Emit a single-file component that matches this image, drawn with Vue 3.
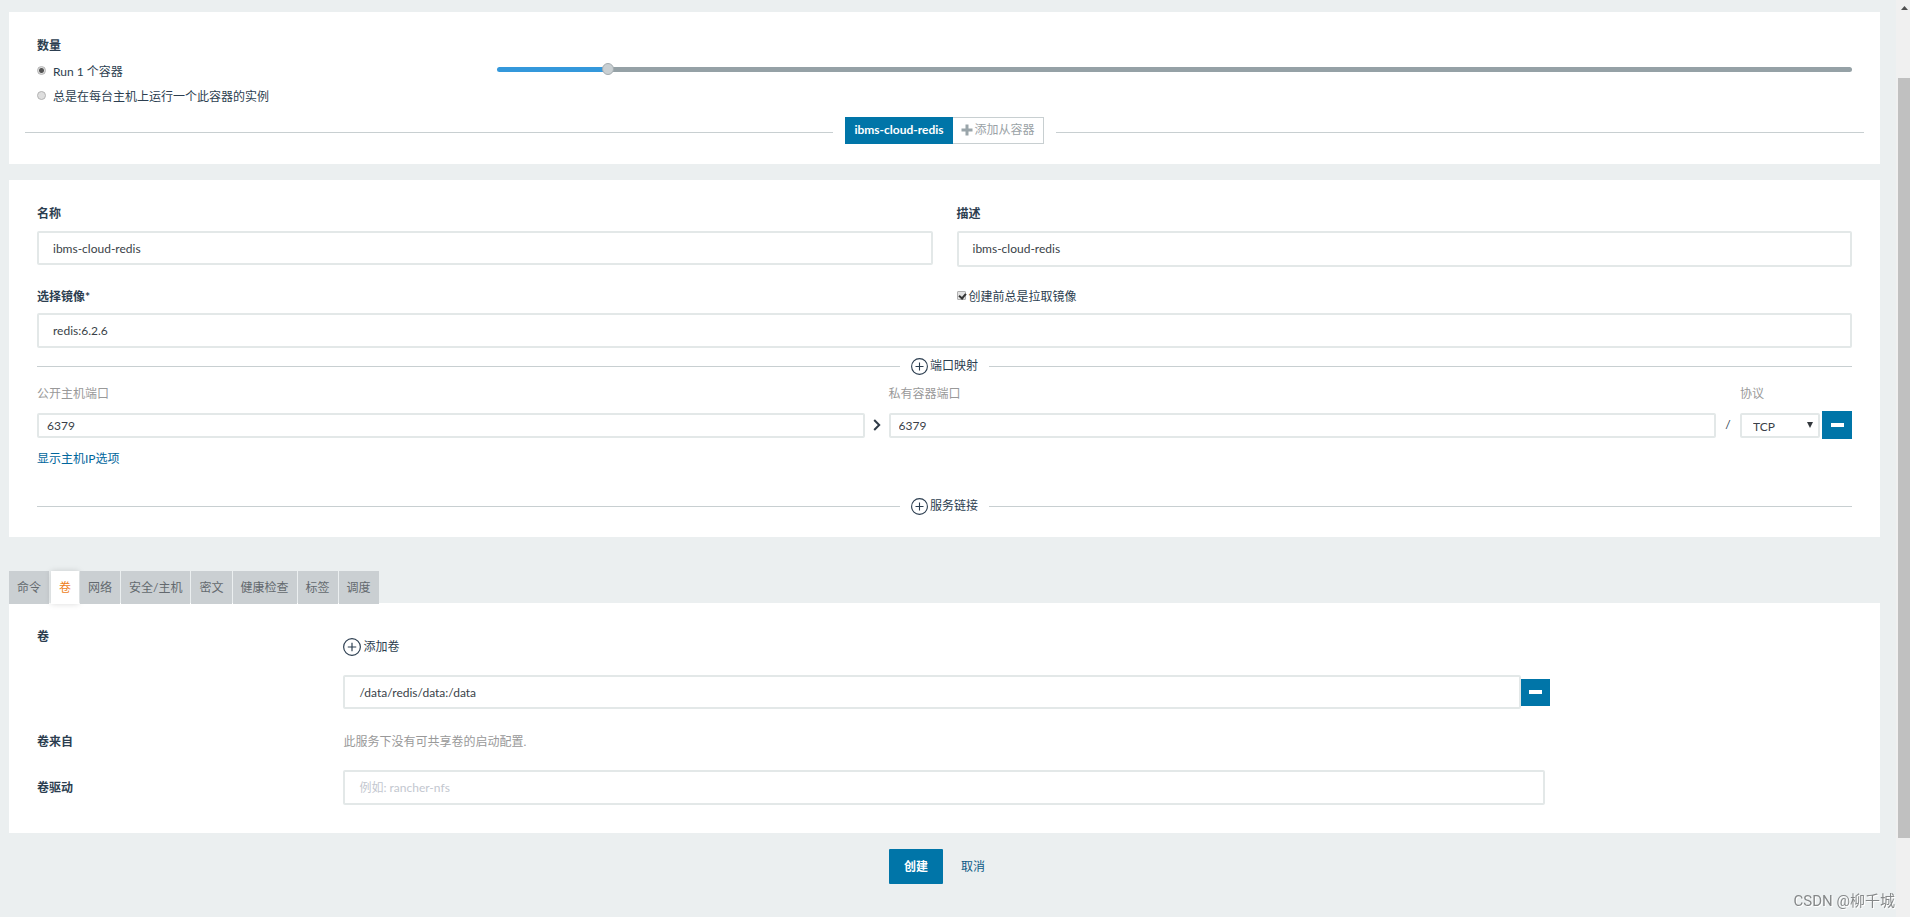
<script setup>
import { ref, computed } from 'vue'

const mode = ref('scale')
const scale = ref(5)
const maxScale = 64
const fill = computed(() => `${(scale.value / maxScale) * 100}%`)

const name = ref('ibms-cloud-redis')
const description = ref('ibms-cloud-redis')
const image = ref('redis:6.2.6')
const pullImage = ref(true)
const publicPort = ref('6379')
const privatePort = ref('6379')
const protocol = ref('TCP')
const volume = ref('/data/redis/data:/data')
const driver = ref('')

const tabs = ['命令', '卷', '网络', '安全/主机', '密文', '健康检查', '标签', '调度']
const activeTab = ref('卷')
</script>

<template>
  <div class="shell">
    <main class="page">
      <section class="panel scale-panel">
        <div class="row">
          <div class="col-3">
            <h2 class="label">数量</h2>
            <label class="radio-line first">
              <input v-model="mode" type="radio" name="mode" value="scale" />
              <span>Run 1 个容器</span>
            </label>
            <label class="radio-line">
              <input v-model="mode" type="radio" name="mode" value="global" />
              <span>总是在每台主机上运行一个此容器的实例</span>
            </label>
          </div>
          <div class="col-9 slider-col">
            <input
              v-model.number="scale"
              class="slider"
              type="range"
              min="0"
              :max="maxScale"
              aria-label="数量"
              :style="{ '--fill': fill }"
            />
          </div>
        </div>
        <div class="divider container-divider">
          <div class="btn-group">
            <button type="button" class="btn-primary container-btn">ibms-cloud-redis</button>
            <button type="button" class="sidekick-btn">
              <svg width="12" height="12" viewBox="0 0 12 12" aria-hidden="true">
                <path d="M4.5 0.5h3v4h4v3h-4v4h-3v-4h-4v-3h4z" fill="#9aa5aa" />
              </svg>
              <span>添加从容器</span>
            </button>
          </div>
        </div>
      </section>

      <section class="panel form-panel">
        <div class="two-cols">
          <div>
            <label class="label" for="name">名称</label>
            <input id="name" v-model="name" class="field name-field" type="text" />
          </div>
          <div>
            <label class="label" for="desc">描述</label>
            <textarea id="desc" v-model="description" class="field desc-field" rows="1"></textarea>
          </div>
        </div>
        <div class="two-cols image-head">
          <label class="label" for="image">选择镜像*</label>
          <label class="check-line">
            <input v-model="pullImage" type="checkbox" />
            <span>创建前总是拉取镜像</span>
          </label>
        </div>
        <input id="image" v-model="image" class="field image-field" type="text" />

        <div class="divider port-divider">
          <button type="button" class="add-btn">
            <svg width="17" height="17" viewBox="0 0 17 17" aria-hidden="true">
              <circle cx="8.5" cy="8.5" r="7.9" />
              <path d="M8.5 4.5v8M4.5 8.5h8" />
            </svg>
            <span>端口映射</span>
          </button>
        </div>

        <div class="ports port-head">
          <label for="public">公开主机端口</label>
          <span></span>
          <label for="private">私有容器端口</label>
          <span></span>
          <label for="proto">协议</label>
        </div>
        <div class="ports port-row">
          <input id="public" v-model="publicPort" class="field small-field" type="text" />
          <svg class="chevron" width="8" height="12" viewBox="0 0 8 12" aria-hidden="true">
            <path d="M1.2 1l5 5-5 5" fill="none" stroke="#2f3b47" stroke-width="2" />
          </svg>
          <input id="private" v-model="privatePort" class="field small-field" type="text" />
          <span class="slash">/</span>
          <div class="select-wrap">
            <select id="proto" v-model="protocol" class="field small-field select">
              <option>TCP</option>
              <option>UDP</option>
            </select>
            <svg class="caret" width="6" height="6" viewBox="0 0 6 6" aria-hidden="true">
              <path d="M0 0h6L3 6z" fill="#33383d" />
            </svg>
          </div>
          <button type="button" class="btn-primary remove-port" aria-label="删除端口">
            <svg width="13" height="4" viewBox="0 0 13 4"><rect width="13" height="4" fill="#fff" /></svg>
          </button>
        </div>
        <a class="link" href="#">显示主机IP选项</a>

        <div class="divider link-divider">
          <button type="button" class="add-btn">
            <svg width="17" height="17" viewBox="0 0 17 17" aria-hidden="true">
              <circle cx="8.5" cy="8.5" r="7.9" />
              <path d="M8.5 4.5v8M4.5 8.5h8" />
            </svg>
            <span>服务链接</span>
          </button>
        </div>
      </section>

      <div class="tabs" role="tablist">
        <button
          v-for="tab in tabs"
          :key="tab"
          type="button"
          role="tab"
          class="tab"
          :class="{ active: tab === activeTab }"
          :aria-selected="tab === activeTab"
          @click="activeTab = tab"
        >
          {{ tab }}
        </button>
      </div>
      <section class="panel volume-panel">
        <div class="row">
          <div class="col-2"><label class="label" for="volume">卷</label></div>
          <div class="col-8">
            <button type="button" class="add-btn add-volume">
              <svg width="18" height="18" viewBox="0 0 17 17" aria-hidden="true">
                <circle cx="8.5" cy="8.5" r="7.9" />
                <path d="M8.5 4.5v8M4.5 8.5h8" />
              </svg>
              <span>添加卷</span>
            </button>
            <div class="volume-row">
              <input id="volume" v-model="volume" class="field" type="text" />
              <button type="button" class="btn-primary remove-volume" aria-label="删除卷">
                <svg width="13" height="4" viewBox="0 0 13 4"><rect width="13" height="4" fill="#fff" /></svg>
              </button>
            </div>
          </div>
        </div>
        <div class="row from-row">
          <div class="col-2"><span class="label">卷来自</span></div>
          <div class="col-8"><p class="muted">此服务下没有可共享卷的启动配置.</p></div>
        </div>
        <div class="row driver-row">
          <div class="col-2"><label class="label" for="driver">卷驱动</label></div>
          <div class="col-8">
            <input id="driver" v-model="driver" class="field image-field" type="text" placeholder="例如: rancher-nfs" />
          </div>
        </div>
      </section>

      <footer class="actions">
        <button type="button" class="btn-primary create">创建</button>
        <button type="button" class="cancel">取消</button>
      </footer>
    </main>
    <div class="scrollbar" aria-hidden="true">
      <svg class="arrow" width="7" height="4" viewBox="0 0 7 4"><path d="M0 4L3.5 0 7 4z" fill="#505050" /></svg>
      <div class="thumb"></div>
    </div>
    <div class="watermark">CSDN @柳千城</div>
  </div>
</template>

<style>
body {
  background: #ebeff0;
}
</style>

<style scoped>
* {
  box-sizing: border-box;
}
.shell {
  display: flex;
  min-height: 100vh;
  background: #ebeff0;
  color: #2c3e50;
  font: 12px/20px Lato, "Noto Sans CJK SC", sans-serif;
}
button,
input,
select,
textarea {
  margin: 0;
  font: inherit;
  color: inherit;
}
button {
  display: flex;
  align-items: center;
  justify-content: center;
  padding: 0;
  border: 0;
  background: none;
  cursor: pointer;
}
.page {
  flex: 1;
  min-width: 0;
  padding: 12px 16px 0 9px;
}
.panel {
  background: #fff;
}
.row {
  display: flex;
  margin: 0 16px;
}
.col-2,
.col-3,
.col-8,
.col-9 {
  padding: 0 12px;
}
.col-2 {
  width: calc(100% / 6);
}
.col-3 {
  width: 25%;
}
.col-8 {
  width: calc(100% / 3 * 2);
}
.col-9 {
  width: 75%;
}
.label {
  display: block;
  margin: 0;
  font-size: 12px;
  font-weight: 700;
}

/* Scale */
.scale-panel {
  padding: 24px 0 20px;
}
.radio-line {
  display: flex;
  gap: 7px;
  margin-top: 5px;
}
.radio-line.first {
  margin-top: 6px;
}
.radio-line input {
  appearance: none;
  width: 9px;
  height: 9px;
  margin-top: 4px;
  border: 1px solid #b4b4b4;
  border-radius: 50%;
  background: #dedede;
}
.radio-line input:checked {
  background: radial-gradient(circle, #555 0 2px, #dedede 3px);
}
.slider-col {
  padding-top: 27px;
}
.slider {
  display: block;
  appearance: none;
  width: 100%;
  height: 12px;
  background: none;
}
.slider::-webkit-slider-runnable-track {
  height: 5px;
  border-radius: 3px;
  background: linear-gradient(to right, #3498db var(--fill), #95a1a6 var(--fill));
}
.slider::-webkit-slider-thumb {
  appearance: none;
  width: 12px;
  height: 12px;
  margin-top: -4px;
  border: 1px solid #a4acb0;
  border-radius: 50%;
  background: #c9cfd2;
}
.divider {
  display: flex;
  align-items: center;
  gap: 11px;
}
.divider::before,
.divider::after {
  content: "";
  flex: 1;
  height: 1px;
  background: #c8cfd1;
}
.container-divider {
  gap: 12px;
  margin: 10px 16px 0;
}
.container-divider::before,
.container-divider::after {
  margin-top: 4px;
}
.btn-group {
  display: flex;
}
.btn-primary {
  background: #0075a8;
  color: #fff;
  font-weight: 700;
}
.container-btn {
  height: 27px;
  padding: 0 9px 2px;
}
.sidekick-btn {
  height: 27px;
  gap: 2px;
  padding: 0 8px 2px;
  border: 1px solid #c8cfd1;
  border-left: 0;
  color: #9aa2a6;
}

/* Container form */
.form-panel {
  margin-top: 16px;
  padding: 24px 28px 21px;
}
.two-cols {
  display: grid;
  grid-template-columns: 1fr 1fr;
  column-gap: 24px;
}
.field {
  display: block;
  width: 100%;
  height: 34px;
  padding: 0 14px;
  border: 2px solid #e3e8e8;
  border-radius: 2px;
  background: #fff;
  color: #3a3f48;
  outline: 0;
}
.field::placeholder {
  color: #c3c7cf;
}
.name-field {
  margin-top: 7px;
}
.desc-field {
  height: 36px;
  margin-top: 7px;
  padding: 6px 14px;
  resize: none;
  overflow: hidden;
}
.image-head {
  height: 20px;
  margin: 20px 0 6px;
}
.image-field {
  height: 35px;
}
.check-line {
  display: flex;
  gap: 3px;
}
.check-line input {
  appearance: none;
  position: relative;
  width: 9px;
  height: 9px;
  margin-top: 4px;
  border: 1px solid #b0b0b0;
  border-radius: 1px;
  background: #e2e2e2;
}
.check-line input:checked::after {
  content: "";
  position: absolute;
  left: 2px;
  top: 0;
  width: 3px;
  height: 5px;
  border: solid #333;
  border-width: 0 2px 2px 0;
  transform: rotate(40deg);
}
.port-divider {
  margin-top: 8px;
}
.add-btn {
  height: 20px;
  gap: 2px;
}
.add-btn svg {
  fill: none;
  stroke: #2c3e50;
  stroke-width: 1.1;
}
.ports {
  display: grid;
  grid-template-columns: 1fr 24px 1fr 24px 80px 32px;
  align-items: center;
}
.port-head {
  margin-top: 8px;
  color: #999;
}
.port-row {
  margin-top: 7px;
}
.small-field {
  height: 25px;
  padding: 0 8px;
}
.chevron,
.slash {
  justify-self: center;
}
.select-wrap {
  position: relative;
}
.select {
  appearance: none;
  padding: 2px 11px 0;
}
.caret {
  position: absolute;
  right: 7px;
  top: 9px;
  pointer-events: none;
}
.remove-port {
  width: 30px;
  height: 28px;
  margin-left: 2px;
}
.link {
  display: table;
  margin-top: 10px;
  color: #00669c;
  text-decoration: none;
}
.link-divider {
  margin-top: 27px;
}

/* Tabs */
.tabs {
  display: flex;
  position: relative;
  gap: 1px;
  margin: 34px 0 -1px;
}
.tab {
  height: 33px;
  padding: 0 8px;
  background: #cacfd2;
  color: #63696e;
}
.tab.active {
  margin-left: 1px;
  background: #fff;
  box-shadow: 0 0 6px rgba(0, 0, 0, 0.15);
  color: #ee7f1d;
}
.volume-panel {
  padding: 24px 0 28px;
}
.add-volume {
  margin-top: 10px;
}
.volume-row {
  display: flex;
  align-items: center;
  width: calc(100% + 5px);
  margin-top: 18px;
}
.volume-row .field {
  flex: 1;
  min-width: 0;
}
.remove-volume {
  width: 29px;
  height: 27px;
}
.from-row {
  margin-top: 23px;
}
.muted {
  margin: 0;
  color: #999;
}
.driver-row {
  align-items: center;
  margin-top: 18px;
}

.actions {
  display: flex;
  justify-content: center;
  gap: 3px;
  margin-top: 16px;
}
.create {
  height: 35px;
  padding: 0 15px;
  border-radius: 1px;
}
.cancel {
  height: 35px;
  padding: 0 15px;
  color: #0b5a86;
}

.scrollbar {
  display: flex;
  flex-direction: column;
  width: 14px;
  padding: 6px 0 79px 2px;
  background: #f0f0f0;
}
.arrow {
  margin-left: 3px;
}
.thumb {
  flex: 1;
  margin-top: 68px;
  background: #c0c0c0;
}
.watermark {
  position: fixed;
  right: 15px;
  bottom: 6px;
  color: #858889;
  font: 15px/20px Roboto, "Noto Sans CJK SC", sans-serif;
  text-shadow: 1px 1px 0 #fff;
}
</style>
